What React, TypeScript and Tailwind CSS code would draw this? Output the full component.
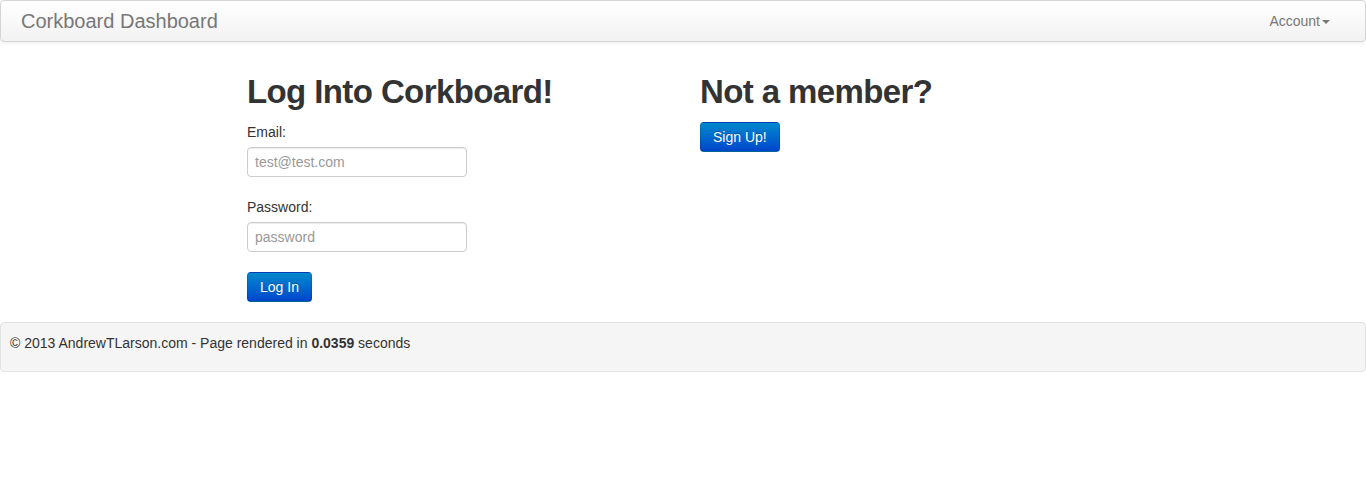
export default function App() {
  return (
    <div className="min-h-[500px] bg-white font-['Liberation_Sans',Arial,sans-serif] text-[14px] leading-[20px] text-[#333]">
      <div className="flex h-[42px] items-center justify-between rounded-[4px] border border-[#d4d4d4] bg-gradient-to-b from-white to-[#f2f2f2] shadow-[0_1px_4px_rgba(0,0,0,0.065)]">
        <span className="pl-[20px] text-[20px] leading-[20px] text-[#777]">Corkboard Dashboard</span>
        <span className="flex items-center pr-[35px] text-[#777]">
          Account
          <span className="ml-[2px] mt-[1px] h-0 w-0 border-x-[4px] border-t-[4px] border-x-transparent border-t-[#777]" />
        </span>
      </div>

      <div className="flex pl-[247px] pt-[30px]">
        <div className="w-[453px]">
          <h1 className="text-[33px] font-bold leading-[40px] tracking-[-0.6px] text-[#333]">Log Into Corkboard!</h1>
          <form className="mt-[10px] flex flex-col items-start">
            <label className="mb-[5px]">Email:</label>
            <input
              type="text"
              placeholder="test@test.com"
              className="h-[30px] w-[220px] rounded-[4px] border border-[#ccc] px-[7px] text-[14px] text-[#555] shadow-[inset_0_1px_1px_rgba(0,0,0,0.075)] outline-none placeholder:text-[#999]"
            />
            <label className="mb-[5px] mt-[20px]">Password:</label>
            <input
              type="password"
              placeholder="password"
              className="h-[30px] w-[220px] rounded-[4px] border border-[#ccc] px-[7px] text-[14px] text-[#555] shadow-[inset_0_1px_1px_rgba(0,0,0,0.075)] outline-none placeholder:text-[#999]"
            />
            <button
              type="button"
              className="mt-[20px] h-[30px] rounded-[4px] border border-[rgba(0,0,0,0.1)] border-b-[rgba(0,0,0,0.25)] bg-gradient-to-b from-[#0088cc] to-[#0044cc] px-[12px] text-white [text-shadow:0_-1px_0_rgba(0,0,0,0.25)]"
            >
              Log In
            </button>
          </form>
        </div>
        <div>
          <h1 className="text-[33px] font-bold leading-[40px] tracking-[-0.6px] text-[#333]">Not a member?</h1>
          <button
            type="button"
            className="mt-[10px] h-[30px] rounded-[4px] border border-[rgba(0,0,0,0.1)] border-b-[rgba(0,0,0,0.25)] bg-gradient-to-b from-[#0088cc] to-[#0044cc] px-[12px] text-white [text-shadow:0_-1px_0_rgba(0,0,0,0.25)]"
          >
            Sign Up!
          </button>
        </div>
      </div>

      <div className="mt-[20px] h-[50px] rounded-[4px] border border-[#e3e3e3] bg-[#f5f5f5] px-[9px] pt-[10px] text-[#333]">
        © 2013 AndrewTLarson.com - Page rendered in <b>0.0359</b> seconds
      </div>
    </div>
  );
}
